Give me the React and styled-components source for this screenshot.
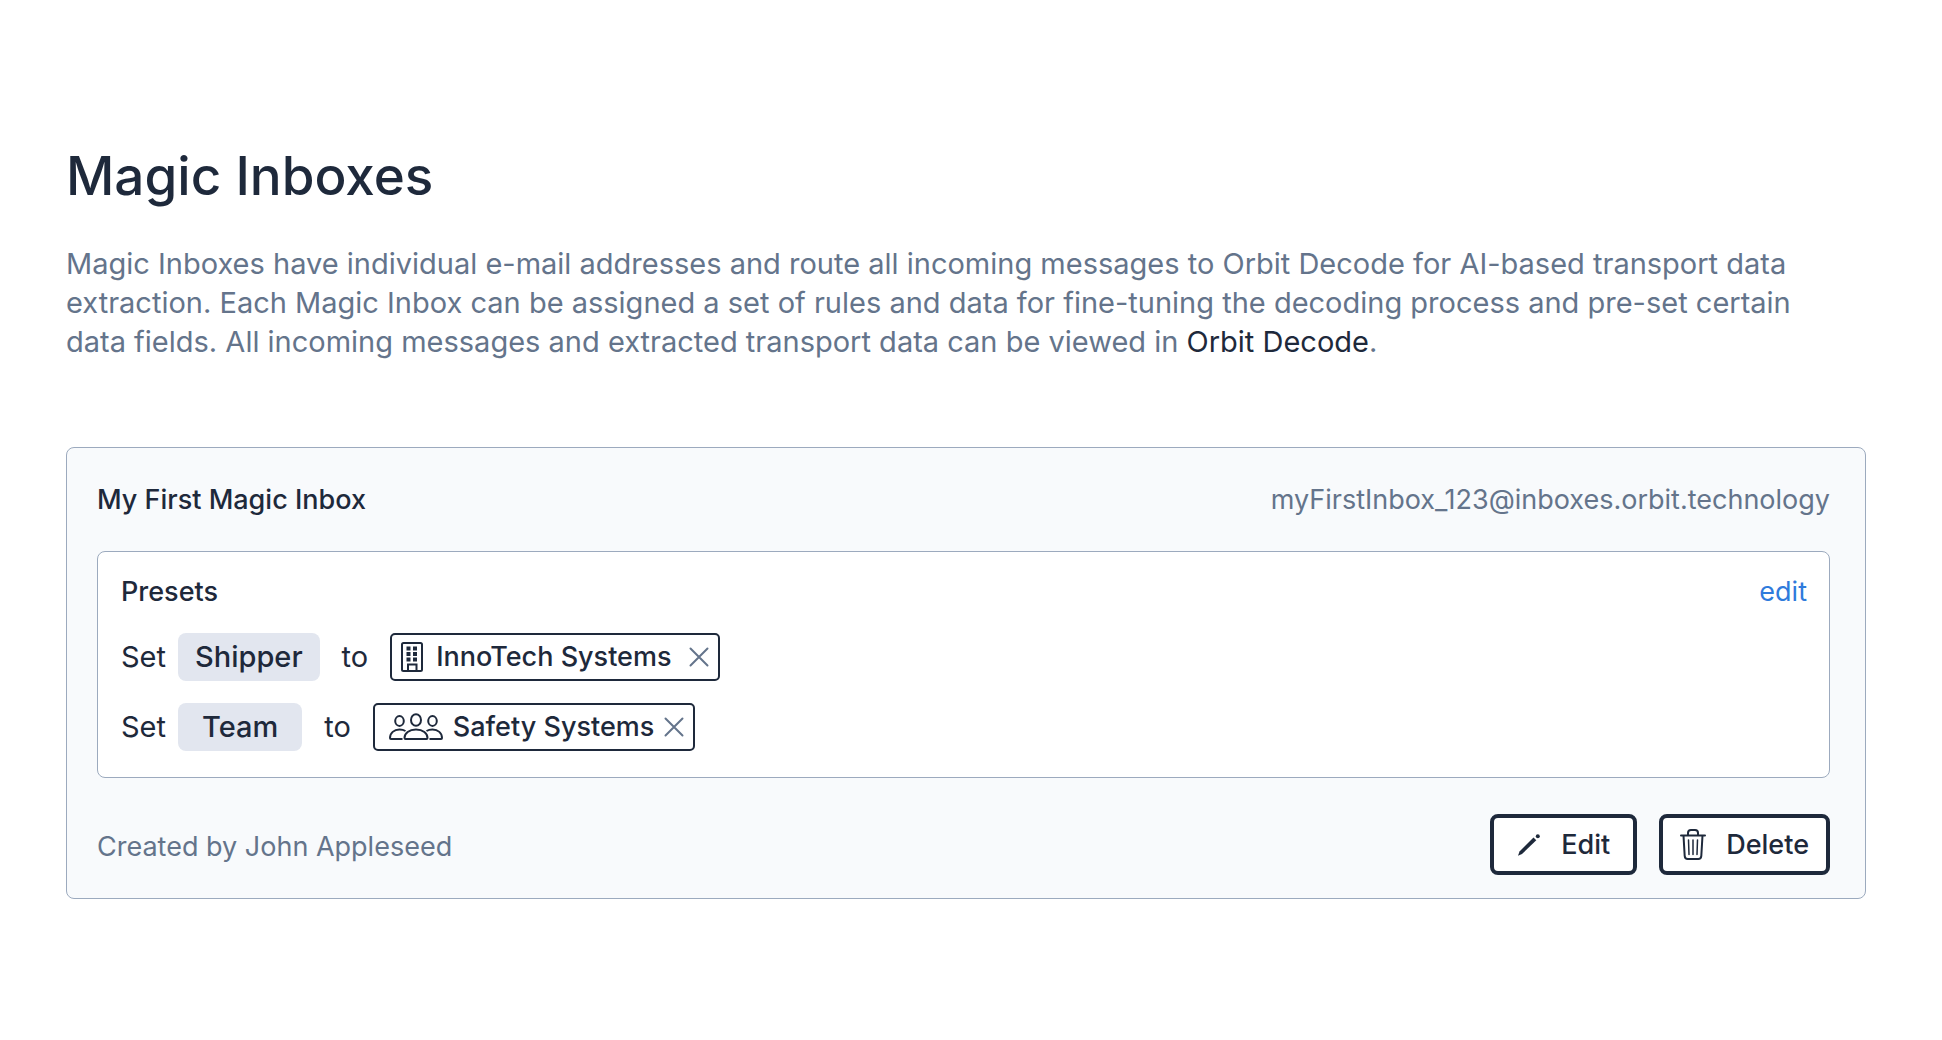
import React from "react";
import styled, { createGlobalStyle } from "styled-components";

const ink = "#1e293b";
const muted = "#64748b";
const line = "#9caabe";

const GlobalStyle = createGlobalStyle`
  *, *::before, *::after { box-sizing: border-box; }
  body {
    margin: 0;
    background: #ffffff;
    color: ${ink};
    font-family: Inter, "Liberation Sans", sans-serif;
    font-size: 27px;
    line-height: 36px;
  }
`;

const Page = styled.main`
  padding: 141px 76px 140px 66px;
`;

const Title = styled.h1`
  margin: 0;
  font-size: 53px;
  line-height: 70px;
  font-weight: 500;
`;

const Intro = styled.p`
  margin: 33px 0 0;
  padding-right: 40px;
  font-size: 29px;
  line-height: 39px;
  color: ${muted};
`;

const ProductLink = styled.a`
  color: ${ink};
  text-decoration: none;
`;

const Card = styled.section`
  margin-top: 86px;
  padding: 34px 35px 23px 30px;
  border: 1px solid ${line};
  border-radius: 8px;
  background: #f8fafc;
`;

const Split = styled.div`
  display: flex;
  align-items: center;
  justify-content: space-between;
`;

const CardTitle = styled.h2`
  margin: 0;
  font-size: 27px;
  font-weight: 500;
`;

const Address = styled.span`
  color: ${muted};
`;

const Panel = styled.section`
  margin-top: 33px;
  padding: 22px 22px 26px 23px;
  border: 1px solid ${line};
  border-radius: 8px;
  background: #ffffff;
`;

const PanelTitle = styled.h3`
  margin: 0;
  font-size: 27px;
  font-weight: 500;
`;

const EditLink = styled.a`
  color: #2f7bdc;
  text-decoration: none;
`;

const Rules = styled.ul`
  display: grid;
  gap: 22px;
  margin: 23px 0 0;
  padding: 0;
  list-style: none;
`;

const Rule = styled.li`
  display: flex;
  align-items: center;
  gap: 22px;
  font-size: 29px;
`;

const Subject = styled.span`
  display: flex;
  align-items: center;
  gap: 12px;
`;

const Field = styled.span`
  padding: 6px ${(p) => p.$pad}px;
  border-radius: 8px;
  background: #e2e6ef;
  font-weight: 500;
`;

const Value = styled.span`
  display: flex;
  align-items: center;
  gap: ${(p) => p.$gap}px;
  height: 48px;
  padding: 0 9px 0 ${(p) => p.$start}px;
  border: 2px solid ${ink};
  border-radius: 5px;
  font-size: 27px;
  font-weight: 500;
`;

const Remove = styled.button`
  display: flex;
  margin-left: ${(p) => p.$space}px;
  padding: 0;
  border: 0;
  background: none;
  color: ${muted};
  cursor: pointer;
`;

const Footer = styled.footer`
  display: flex;
  align-items: center;
  justify-content: space-between;
  margin-top: 36px;
`;

const Creator = styled.span`
  padding-top: 5px;
  color: ${muted};
`;

const Actions = styled.div`
  display: flex;
  gap: 22px;
`;

const Action = styled.button`
  display: flex;
  align-items: center;
  gap: 20px;
  height: 61px;
  padding: 0 ${(p) => p.$pad}px;
  border: 4px solid ${ink};
  border-radius: 8px;
  background: #ffffff;
  color: ${ink};
  font: inherit;
  font-weight: 500;
  cursor: pointer;
`;

const BuildingIcon = () => (
  <svg width="24" height="32" viewBox="0 0 24 32" aria-hidden="true">
    <g fill="none" stroke="currentColor" strokeWidth="2">
      <rect x="2" y="2" width="20" height="28" rx="1.5" />
      <path d="M8 30v-6.500h8.500V30" />
    </g>
    <path
      fill="currentColor"
      d="M6.500 5.500h4v4h-4zM13 5.500h4v4h-4zM6.500 11h4v4h-4zM13 11h4v4h-4zM6.500 16.500h4v4h-4zM13 16.500h4v4h-4z"
    />
  </svg>
);

const PeopleIcon = () => (
  <svg width="54" height="28" viewBox="0 0 54 28" fill="none" stroke="currentColor" strokeWidth="2" aria-hidden="true">
    <ellipse cx="27" cy="7" rx="5" ry="5.800" />
    <ellipse cx="10.500" cy="8" rx="4.300" ry="4.900" />
    <ellipse cx="43.500" cy="8" rx="4.300" ry="4.900" />
    <path d="M15.500 25C15.500 20.500 20 16.500 27 16.500s11.500 4 11.500 8.500q0 1-1 1h-21q-1 0-1-1z" />
    <path d="M13.500 26H2q-1 0-1-1c0-5 4-8.500 9.500-8.500q3.500 0 6 1.500M40.500 26H52q1 0 1-1c0-5-4-8.500-9.500-8.500q-3.500 0-6 1.500" />
  </svg>
);

const CrossIcon = () => (
  <svg width="20" height="20" viewBox="0 0 20 20" fill="none" stroke="currentColor" strokeWidth="2" strokeLinecap="round" aria-hidden="true">
    <path d="M1.500 1.500l17 17M18.500 1.500l-17 17" />
  </svg>
);

const PencilIcon = () => (
  <svg width="24" height="24" viewBox="0 0 24 24" fill="currentColor" aria-hidden="true">
    <path d="M16.500 4.500l2.800 2.800L5 21 1 22.800l1.500-4.300z" />
    <circle cx="20.800" cy="3.200" r="2" />
  </svg>
);

const TrashIcon = () => (
  <svg width="26" height="31" viewBox="0 0 26 31" fill="none" stroke="currentColor" strokeWidth="2" strokeLinecap="round" aria-hidden="true">
    <path d="M1 6.500h24M8 6V4q0-3 3-3h4q3 0 3 3v2M3.500 6.500l1.200 20.500q.2 3 3 3h10.600q2.800 0 3-3L22.500 6.500" />
    <path d="M8.500 11l.5 14.500M13 11v14.500M17.500 11l-.5 14.500" strokeWidth="1.500" />
  </svg>
);

export default function App() {
  return (
    <>
      <GlobalStyle />
      <Page>
        <Title>Magic Inboxes</Title>
        <Intro>
          Magic Inboxes have individual e-mail addresses and route all incoming messages to Orbit
          Decode for AI-based transport data extraction. Each Magic Inbox can be assigned a set of
          rules and data for fine-tuning the decoding process and pre-set certain data fields. All
          incoming messages and extracted transport data can be viewed in{" "}
          <ProductLink href="#decode">Orbit Decode</ProductLink>.
        </Intro>
        <Card>
          <Split>
            <CardTitle>My First Magic Inbox</CardTitle>
            <Address>myFirstInbox_123@inboxes.orbit.technology</Address>
          </Split>
          <Panel>
            <Split>
              <PanelTitle>Presets</PanelTitle>
              <EditLink href="#presets">edit</EditLink>
            </Split>
            <Rules>
              <Rule>
                <Subject>
                  Set <Field $pad={17}>Shipper</Field>
                </Subject>
                to
                <Value $start={8} $gap={12}>
                  <BuildingIcon />
                  InnoTech Systems
                  <Remove type="button" aria-label="Remove InnoTech Systems" $space={6}>
                    <CrossIcon />
                  </Remove>
                </Value>
              </Rule>
              <Rule>
                <Subject>
                  Set <Field $pad={24}>Team</Field>
                </Subject>
                to
                <Value $start={14} $gap={10}>
                  <PeopleIcon />
                  Safety Systems
                  <Remove type="button" aria-label="Remove Safety Systems" $space={0}>
                    <CrossIcon />
                  </Remove>
                </Value>
              </Rule>
            </Rules>
          </Panel>
          <Footer>
            <Creator>Created by John Appleseed</Creator>
            <Actions>
              <Action type="button" $pad={23}>
                <PencilIcon />
                Edit
              </Action>
              <Action type="button" $pad={17}>
                <TrashIcon />
                Delete
              </Action>
            </Actions>
          </Footer>
        </Card>
      </Page>
    </>
  );
}
